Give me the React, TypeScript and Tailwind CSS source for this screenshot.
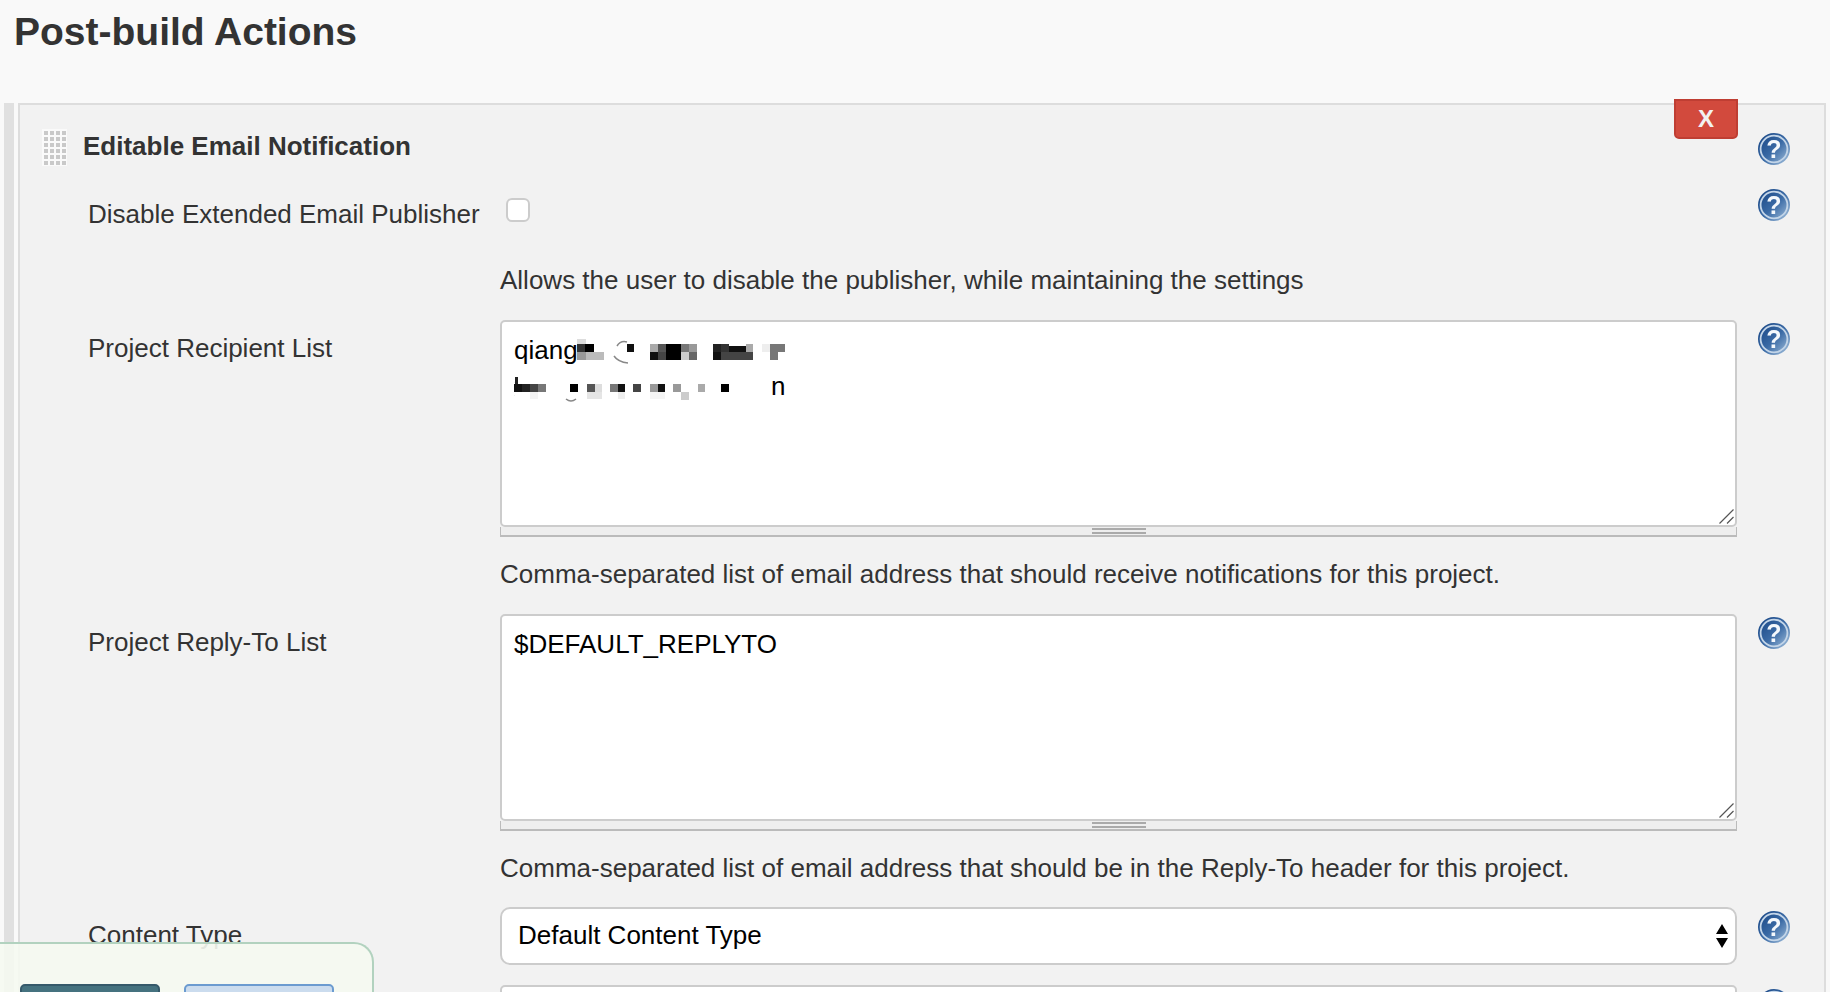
const FONT = "[font-family:'Liberation_Sans',Arial,sans-serif]"

// pixelated redaction blocks, x/y in px from the top-left of the field text
const MOSAIC: [number, number, number, number, string][] = [
  [63, 17, 9, 5, '#dddddd'], [63, 22, 8, 9, '#333333'], [71, 22, 9, 9, '#000000'], [63, 30, 9, 8, '#999999'], [72, 30, 18, 8, '#bbbbbb'],
  [113, 22, 7, 8, '#111111'], [136, 22, 8, 8, '#aaaaaa'], [144, 22, 8, 8, '#555555'], [152, 22, 15, 8, '#000000'],
  [167, 22, 8, 8, '#777777'], [175, 22, 8, 8, '#999999'], [136, 30, 8, 8, '#111111'], [144, 30, 8, 8, '#444444'],
  [152, 30, 15, 8, '#000000'], [167, 30, 8, 8, '#cccccc'], [175, 30, 8, 8, '#666666'], [199, 22, 8, 8, '#222222'],
  [207, 22, 8, 8, '#333333'], [215, 24, 17, 6, '#111111'], [232, 22, 7, 8, '#aaaaaa'], [199, 30, 8, 8, '#111111'],
  [207, 30, 32, 8, '#444444'], [248, 22, 8, 8, '#eeeeee'], [256, 22, 15, 8, '#777777'], [256, 30, 8, 8, '#777777'],
  [1, 55, 3, 7, '#222222'], [0, 62, 8, 8, '#111111'], [8, 62, 8, 8, '#222222'], [16, 62, 8, 8, '#444444'],
  [24, 62, 8, 8, '#777777'], [16, 70, 8, 7, '#f4f4f4'], [56, 62, 8, 8, '#000000'], [73, 62, 8, 8, '#555555'],
  [81, 62, 7, 8, '#dddddd'], [73, 70, 15, 7, '#e5e5e5'], [96, 62, 8, 8, '#777777'], [104, 62, 7, 8, '#111111'],
  [104, 70, 7, 7, '#eeeeee'], [119, 62, 8, 8, '#444444'], [136, 62, 8, 8, '#999999'], [144, 62, 7, 8, '#111111'],
  [136, 70, 15, 7, '#f5f5f5'], [159, 62, 8, 8, '#999999'], [167, 70, 8, 8, '#cccccc'], [184, 62, 7, 8, '#aaaaaa'],
  [207, 62, 8, 8, '#000000'],
]

function HelpIcon() {
  return (
    <svg width="32" height="32" viewBox="0 0 32 32" className="block blur-[0.4px]">
      <defs>
        <linearGradient id="help" x1="0.1" y1="0.1" x2="0.95" y2="0.9">
          <stop offset="0" stopColor="#1c4a88" />
          <stop offset="0.5" stopColor="#3a6aa5" />
          <stop offset="1" stopColor="#9ab9d8" />
        </linearGradient>
      </defs>
      <circle cx="16" cy="16" r="16" fill="url(#help)" />
      <circle cx="16" cy="16" r="13.4" fill="none" stroke="#c3d5e8" strokeWidth="1.8" />
      <text x="16" y="24.5" textAnchor="middle" fontSize="25" fontWeight="700" fill="#f4f8fc" fontFamily="'Liberation Sans', Arial, sans-serif">?</text>
    </svg>
  )
}

function DragHandle() {
  const dots = []
  for (let r = 0; r < 6; r++) {
    for (let c = 0; c < 4; c++) {
      dots.push(<rect key={`${r}-${c}`} x={2 + c * 6} y={2 + r * 6} width="4" height="4" fill="#c9c9c9" />)
    }
  }
  return (
    <svg width="25" height="37" viewBox="0 0 25 37" className="block bg-[#fafafa] blur-[0.4px]">
      {dots}
    </svg>
  )
}

function Grip() {
  return (
    <div className="flex h-[10px] justify-center border-x border-b-2 border-[#bbbbbb] bg-[#eeeeee] pt-[1px]">
      <div className="h-[6px] w-[54px] border-y-2 border-[#aaaaaa]" />
    </div>
  )
}

function BoxField({ children }: { children: React.ReactNode }) {
  return (
    <div>
      <div className="relative h-[207px] overflow-hidden rounded-[5px] border-2 border-[#cccccc] bg-white px-[12px] py-[10px] text-[26px] leading-[36px] text-black">
        {children}
        {/* resize corner */}
        <svg width="15" height="15" viewBox="0 0 15 15" className="absolute bottom-[1px] right-[1px]">
          <path d="M0.5 14.5 14.5 0.5M8 14.5 14.5 8" stroke="#555555" strokeWidth="1.2" fill="none" />
        </svg>
      </div>
      <Grip />
    </div>
  )
}

function Row({ label, children, help = 3 }: { label?: string; children: React.ReactNode; help?: number }) {
  return (
    <div className="grid grid-cols-[412px_1237px_1fr]">
      <div className="pt-[8px] text-[26px] leading-[40px] text-[#333333]">{label}</div>
      <div>{children}</div>
      <div className="pl-[21px]" style={{ paddingTop: help }}>
        <HelpIcon />
      </div>
    </div>
  )
}

function Desc({ text }: { text: string }) {
  return (
    <div className="h-[77px] pl-[412px] pt-[16px] text-[26px] leading-[42px] text-[#333333]">{text}</div>
  )
}

export default function App() {
  return (
    <div className={`relative h-[992px] overflow-hidden bg-[#f9f9f9] ${FONT}`}>
      <h1 className="h-[103px] pl-[14px] pt-[8px] text-[39px] font-bold leading-[48px] text-[#333333]">
        Post-build Actions
      </h1>

      <div className="flex h-[889px] pl-[4px]">
        <div className="w-[10px] bg-[#e0e0e0]" />
        <div className="relative ml-[4px] w-[1808px] border-2 border-b-0 border-[#dddddd] bg-[#f2f2f2] pl-[68px]">
          {/* delete button */}
          <div className="absolute right-[86px] top-[-6px] flex h-[40px] w-[64px] items-center justify-center rounded-b-[5px] border-2 border-[#bf3e33] bg-[#d24a3d] text-[24px] font-bold text-[#f2f2f2]">
            X
          </div>

          {/* header */}
          <div className="relative h-[84px]">
            <div className="absolute left-[1670px] top-[28px]">
              <HelpIcon />
            </div>
            <div className="absolute left-[-46px] top-[24px]">
              <DragHandle />
            </div>
            <div className="absolute left-[-5px] top-[22px] text-[26px] font-bold leading-[38px] text-[#333333]">
              Editable Email Notification
            </div>
          </div>

          <div className="-mt-[3px] h-[73px]">
            <Row label="Disable Extended Email Publisher" help={3}>
              <div className="ml-[6px] mt-[12px] h-[24px] w-[24px] rounded-[6px] border-2 border-[#cccccc] bg-white" />
            </Row>
          </div>
          <div className="h-[61px] pl-[412px] text-[26px] leading-[42px] text-[#333333]">
            Allows the user to disable the publisher, while maintaining the settings
          </div>

          <Row label="Project Recipient List">
            <BoxField>
              <div>qiang</div>
              <div className="pl-[257px]">n</div>
              <svg width="290" height="90" className="absolute left-[12px] top-0">
                {MOSAIC.map(([x, y, w, h, fill], i) => (
                  <rect key={i} x={x} y={y} width={w} height={h} fill={fill} />
                ))}
                <path d="M113 20a9 9 0 0 0 -10 4M100 34q4 6 14 7M52 77q5 4 10 0M0 60a8 8 0 0 0 0 14" stroke="#888888" strokeWidth="1.5" fill="none" />
              </svg>
            </BoxField>
          </Row>
          <Desc text="Comma-separated list of email address that should receive notifications for this project." />

          <Row label="Project Reply-To List">
            <BoxField>$DEFAULT_REPLYTO</BoxField>
          </Row>
          <Desc text="Comma-separated list of email address that should be in the Reply-To header for this project." />

          <div className="-mt-[1px]">
            <Row label="Content Type" help={4}>
              <div className="relative">
                <select className="h-[58px] w-full appearance-none rounded-[10px] border-2 border-[#cccccc] bg-white pb-[2px] pl-[16px] text-[26px] text-black">
                  <option>Default Content Type</option>
                </select>
                <svg width="12" height="24" viewBox="0 0 12 24" className="absolute right-[9px] top-[17px]">
                  <path d="M6 0 12 10H0ZM0 14H12L6 24Z" fill="#000000" />
                </svg>
              </div>
            </Row>
          </div>

          <div className="mt-[20px]">
            <Row help={4}>
              <div className="h-[60px] rounded-[5px] border-2 border-[#cccccc] bg-white" />
            </Row>
          </div>
        </div>
      </div>

      {/* sticky save bar */}
      <div className="absolute left-0 top-[942px] flex h-[60px] w-[374px] gap-[24px] rounded-tr-[20px] border-r-2 border-t-2 border-[#b2d2bf] bg-[#f5f9f1]/90 pl-[20px] pt-[40px]">
        <div className="h-[20px] w-[140px] rounded-t-[5px] border-2 border-[#35596a] bg-[#45727f]" />
        <div className="h-[20px] w-[150px] rounded-t-[5px] border-2 border-[#6b9bd0] bg-[#cbdcee]" />
      </div>
    </div>
  )
}
